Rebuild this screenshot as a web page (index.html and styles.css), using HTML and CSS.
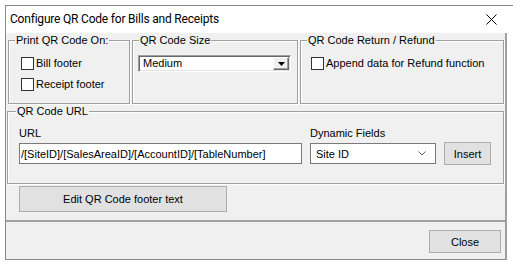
FILE: index.html
```html
<!DOCTYPE html>
<html>
<head>
<meta charset="utf-8">
<link rel="stylesheet" href="styles.css">
</head>
<body>
<div class="win">
  <div class="titlebar">
    <span class="title">Configure QR Code for Bills and Receipts</span>
    <svg class="xicon" width="11" height="11" viewBox="0 0 11 11"><path d="M0.5 0.5 L10.5 10.5 M10.5 0.5 L0.5 10.5" stroke="#000" stroke-width="1" fill="none"/></svg>
  </div>
  <div class="body">
    <div class="panel">
      <div class="toprow">
        <div class="group g1">
          <div class="gtitle">Print QR Code On:</div>
          <label class="chk first"><span class="box"></span><span>Bill footer</span></label>
          <label class="chk second"><span class="box"></span><span>Receipt footer</span></label>
        </div>
        <div class="group g2">
          <div class="gtitle">QR Code Size</div>
          <div class="ccombo">
            <span class="cval">Medium</span>
            <span class="cbtn"><svg width="7" height="4" viewBox="0 0 7 4"><path d="M0 0 H7 L3.5 4 Z" fill="#000"/></svg></span>
          </div>
        </div>
        <div class="group g3">
          <div class="gtitle">QR Code Return / Refund</div>
          <label class="chk first"><span class="box"></span><span>Append data for Refund function</span></label>
        </div>
      </div>
      <div class="group g4">
        <div class="gtitle">QR Code URL</div>
        <div class="urlgrid">
          <div class="lbl">URL</div>
          <div class="lbl">Dynamic Fields</div>
          <div></div>
          <div class="input">/[SiteID]/[SalesAreaID]/[AccountID]/[TableNumber]</div>
          <div class="input combo"><span>Site ID</span><svg width="8" height="5" viewBox="0 0 8 5"><path d="M0.5 0.5 L4 4 L7.5 0.5" stroke="#606060" stroke-width="1" fill="none"/></svg></div>
          <div class="btn insert">Insert</div>
        </div>
      </div>
      <div class="btn edit">Edit QR Code footer text</div>
    </div>
    <div class="footer">
      <div class="btn close">Close</div>
    </div>
  </div>
</div>
</body>
</html>
```
FILE: styles.css
```css
* { box-sizing: border-box; }
body {
  margin: 0;
  background: #fff;
  font-family: "Liberation Sans", Arial, sans-serif;
  font-size: 11px;
  color: #000;
}
.win {
  margin: 5px 0 0 5px;
  width: 508px;
}
.titlebar {
  height: 28px;
  background: #fff;
  border-top: 1px solid #8a8a8a;
  border-left: 1px solid #8a8a8a;
  display: flex;
  align-items: center;
  padding-left: 4px;
}
.title {
  font-family: Roboto, "Liberation Sans", sans-serif;
  font-size: 12px;
  line-height: 15px;
  letter-spacing: -0.2px;
}
.xicon {
  margin-left: auto;
  margin-right: 16px;
}
.body {
  width: 502px;
  background: #f0f0f0;
  border-left: 1px solid #8a8a8a;
  border-right: 2px solid #a0a0a0;
  border-bottom: 1px solid #8a8a8a;
}
.panel {
  height: 189px;
  border-bottom: 2px solid #a0a0a0;
  padding: 7px 0 0 2px;
}
.toprow {
  display: flex;
  gap: 2px;
}
.group {
  border: 1px solid #a0a0a0;
  box-shadow: 1px 1px 0 #fff, inset 1px 1px 0 #fff;
}
.gtitle {
  margin-top: -7px;
  padding: 0 1px;
  background: #f0f0f0;
  width: fit-content;
  line-height: 13px;
}
.g1 { width: 122px; height: 64px; padding-left: 12px; }
.g1 .gtitle { margin-left: -6px; }
.g2 { width: 166px; height: 64px; padding-left: 5px; }
.g2 .gtitle { margin-left: 1px; }
.g3 { width: 204px; height: 64px; padding-left: 10px; }
.g3 .gtitle { margin-left: -4px; }
.chk {
  display: flex;
  align-items: center;
  height: 13px;
  gap: 2px;
  line-height: 13px;
}
.chk.first { margin-top: 10px; }
.chk.second { margin-top: 8px; }
.box {
  width: 13px;
  height: 13px;
  background: #fff;
  border: 1px solid #333;
}
.ccombo {
  margin-top: 8px;
  width: 153px;
  height: 17px;
  background: #fff;
  border: 1px solid;
  border-color: #a0a0a0 #fff #fff #a0a0a0;
  box-shadow: inset 1px 1px 0 #696969, inset -1px -1px 0 #e3e3e3;
  display: flex;
  align-items: center;
  padding: 0 1px 0 4px;
}
.cval { flex: 1; line-height: 13px; }
.cbtn {
  width: 16px;
  height: 13px;
  background: #f0f0f0;
  border: 1px solid;
  border-color: #fff #696969 #696969 #fff;
  box-shadow: inset -1px -1px 0 #a0a0a0;
  display: flex;
  align-items: center;
  justify-content: center;
}
.g4 {
  margin: 7px 0 0 -1px;
  width: 497px;
  height: 73px;
  padding-left: 11px;
}
.g4 .gtitle { margin-left: -3px; }
.urlgrid {
  margin-top: 9px;
  display: grid;
  grid-template-columns: 283px 126px 47px;
  grid-template-rows: 13px 21px;
  column-gap: 8px;
  row-gap: 3px;
}
.lbl { line-height: 13px; }
.input {
  height: 21px;
  background: #fff;
  border: 1px solid #7a7a7a;
  padding-left: 1px;
  display: flex;
  align-items: center;
  white-space: nowrap;
}
.combo {
  padding: 0 9px 0 5px;
  justify-content: space-between;
}
.btn {
  background: #e1e1e1;
  border: 1px solid #adadad;
  display: flex;
  align-items: center;
  justify-content: center;
}
.insert {
  height: 23px;
  align-self: center;
}
.edit {
  margin: 2px 0 0 11px;
  width: 208px;
  height: 26px;
}
.footer {
  height: 37px;
  display: flex;
  justify-content: flex-end;
  padding: 8px 4px 0 0;
}
.close {
  width: 72px;
  height: 23px;
}
```
